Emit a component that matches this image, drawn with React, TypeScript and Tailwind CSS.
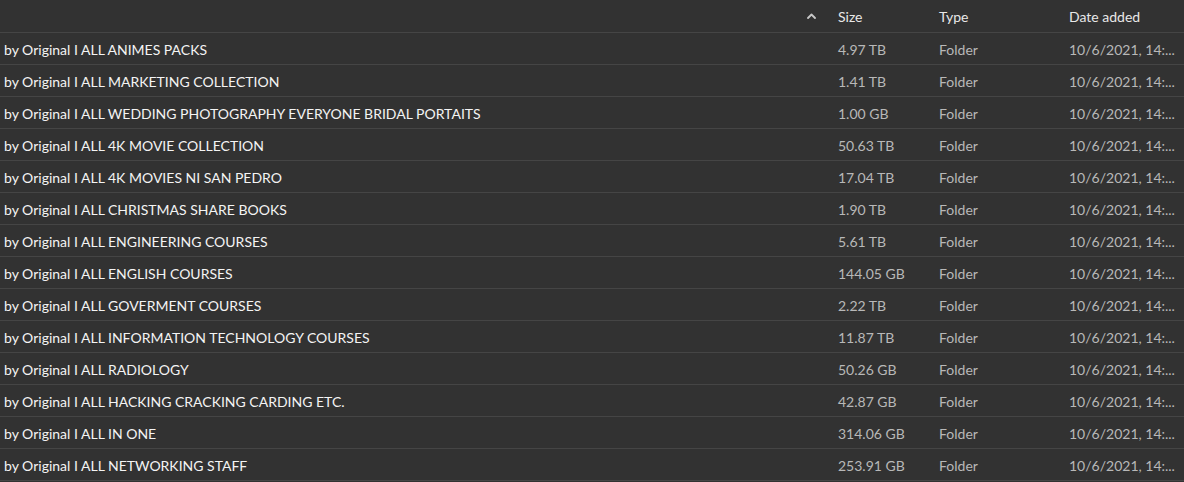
import React from 'react';

interface Item {
  name: string;
  size: string;
}

const items: Item[] = [
  { name: 'by Original I ALL ANIMES PACKS', size: '4.97 TB' },
  { name: 'by Original I ALL MARKETING COLLECTION', size: '1.41 TB' },
  { name: 'by Original I ALL WEDDING PHOTOGRAPHY EVERYONE BRIDAL PORTAITS', size: '1.00 GB' },
  { name: 'by Original I ALL 4K MOVIE COLLECTION', size: '50.63 TB' },
  { name: 'by Original I ALL 4K MOVIES NI SAN PEDRO', size: '17.04 TB' },
  { name: 'by Original I ALL CHRISTMAS SHARE BOOKS', size: '1.90 TB' },
  { name: 'by Original I ALL ENGINEERING COURSES', size: '5.61 TB' },
  { name: 'by Original I ALL ENGLISH COURSES', size: '144.05 GB' },
  { name: 'by Original I ALL GOVERMENT COURSES', size: '2.22 TB' },
  { name: 'by Original I ALL INFORMATION TECHNOLOGY COURSES', size: '11.87 TB' },
  { name: 'by Original I ALL RADIOLOGY', size: '50.26 GB' },
  { name: 'by Original I ALL HACKING CRACKING CARDING ETC.', size: '42.87 GB' },
  { name: 'by Original I ALL IN ONE', size: '314.06 GB' },
  { name: 'by Original I ALL NETWORKING STAFF', size: '253.91 GB' },
];

const SortUp = () => (
  <svg width="9" height="6" viewBox="0 0 9 6" fill="none">
    <path d="M1 5 L4.5 1.5 L8 5" stroke="#c8c8c8" strokeWidth="1.8" strokeLinecap="round" strokeLinejoin="round" />
  </svg>
);

export default function App() {
  return (
    <div className="w-[1184px] h-[482px] bg-[#323232] overflow-hidden text-[14px]" style={{ fontFamily: 'Lato, "Noto Sans", sans-serif' }}>
      {/* header */}
      <div className="flex items-center h-[33px] border-b border-[#454545] text-[#e8e8e8]">
        <div className="flex-1 flex justify-end pr-[22px]">
          <SortUp />
        </div>
        <div className="w-[101px]">Size</div>
        <div className="w-[130px]">Type</div>
        <div className="w-[115px]">Date added</div>
      </div>

      {items.map(item => (
        <div key={item.name} className="flex items-center h-[32px] pt-[2px] border-b border-[#454545]">
          <div className="flex-1 pl-[4px] text-[#f4f4f4] truncate">{item.name}</div>
          <div className="w-[101px] text-[#b8b8b8]">{item.size}</div>
          <div className="w-[130px] text-[#b8b8b8]">Folder</div>
          <div className="w-[115px] text-[#b8b8b8] whitespace-nowrap">10/6/2021, 14:...</div>
        </div>
      ))}
    </div>
  );
}
